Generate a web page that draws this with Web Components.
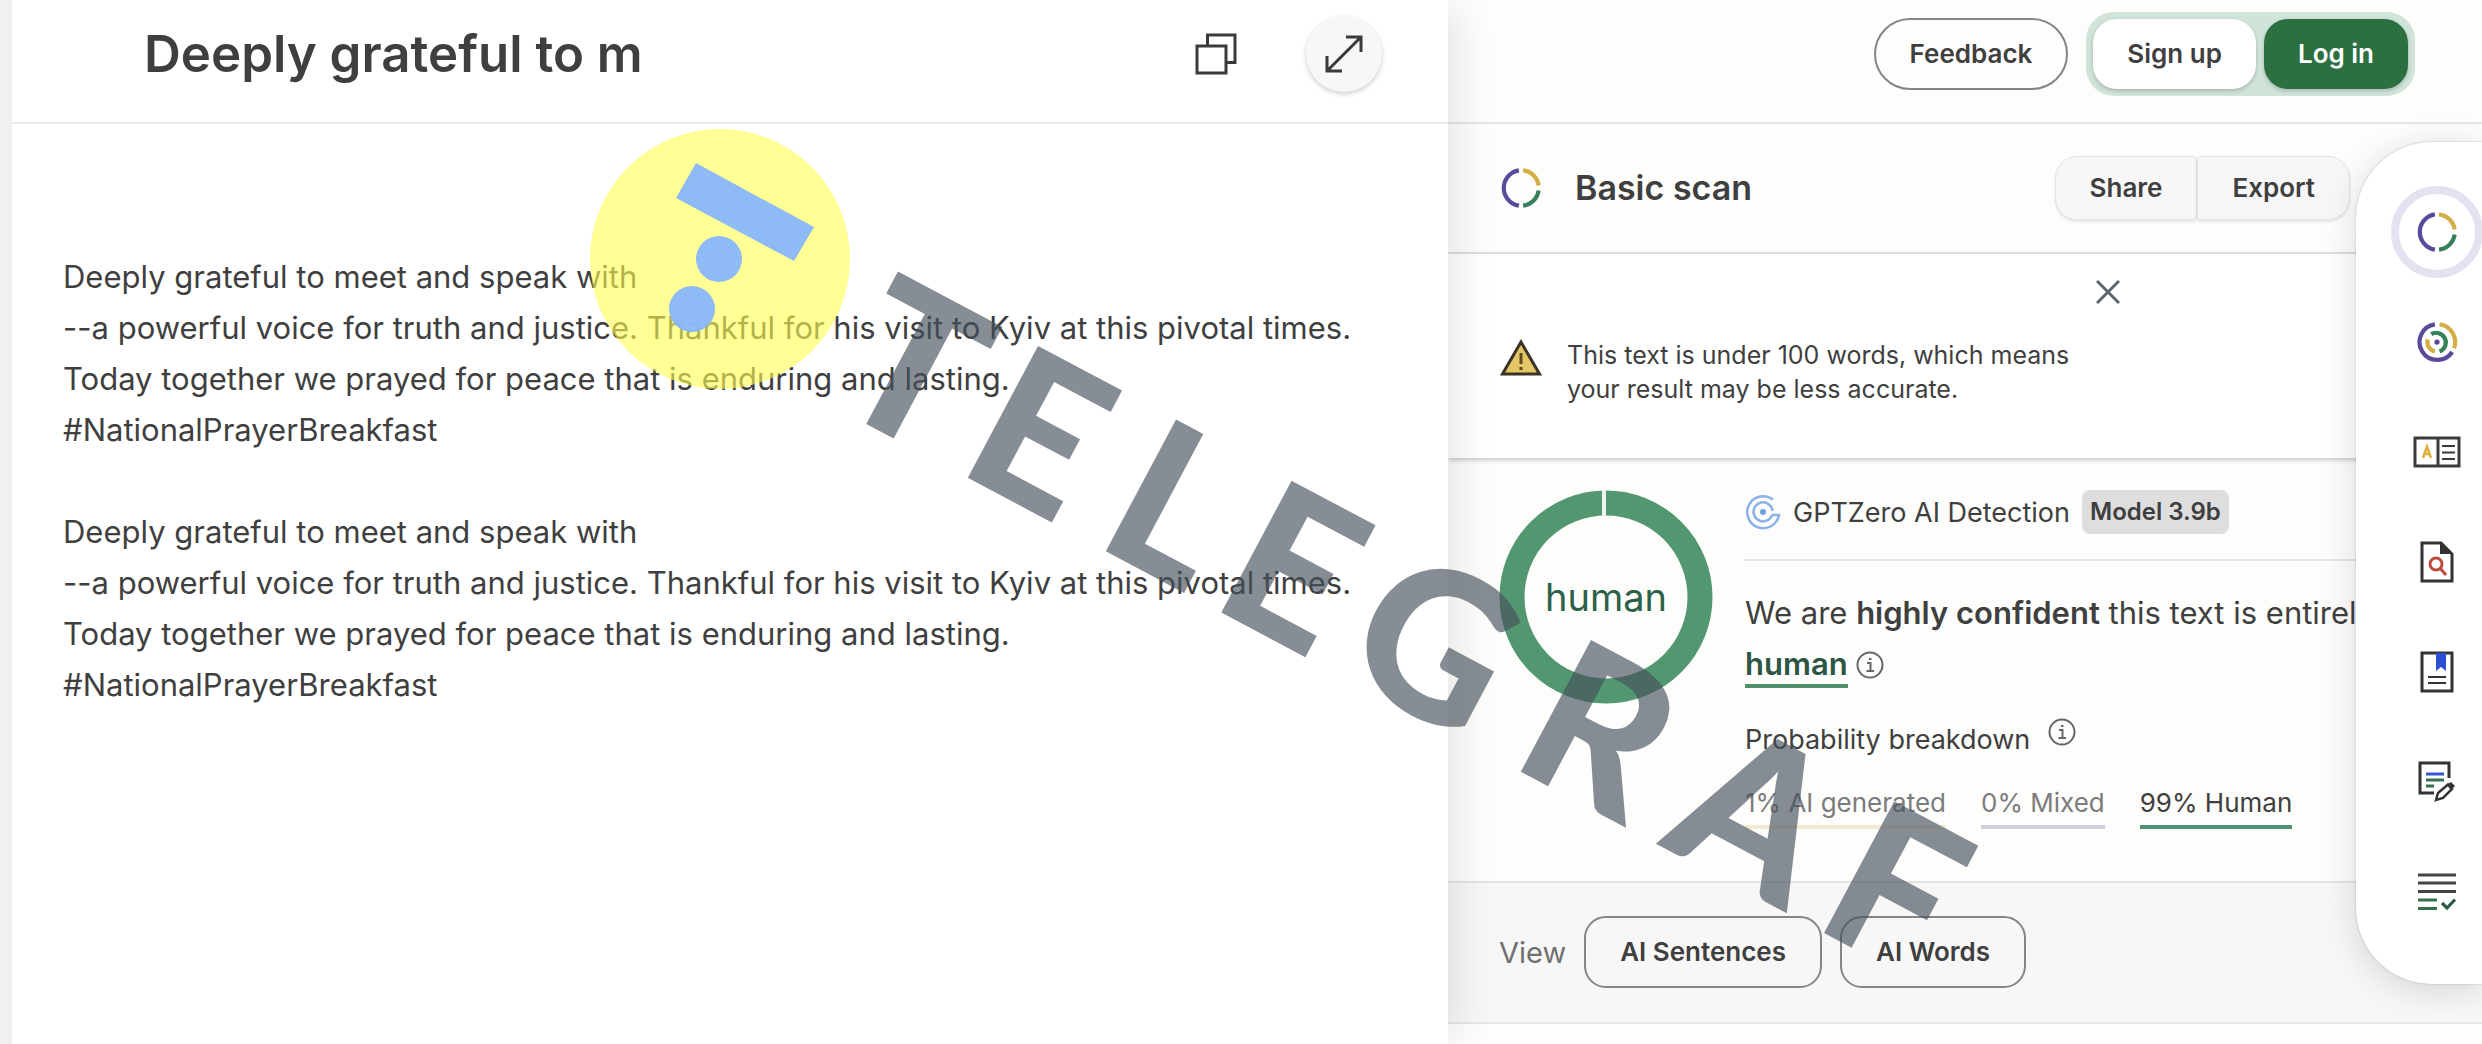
<!DOCTYPE html>
<html lang="en">
<head>
<meta charset="utf-8">
<title>Basic scan</title>
<style>
  html, body {
    height: 100%;
  }

  body {
    margin: 0;
    overflow: hidden;
    background: #f0f0f0;
    color: #3f3f3f;
    font-family: Inter, "Liberation Sans", sans-serif;
    font-size: 26px;
  }
</style>
</head>
<body>
<scan-page></scan-page>

<script>
const RING = `
  <path d="M18 3.2A17 17 0 0 0 18 36.8" stroke="#5b4a9c"/>
  <path d="M22 3.2A17 17 0 0 1 36.8 17.6" stroke="#d3ae45"/>
  <path d="M36.8 22.4A17 17 0 0 1 22 36.8" stroke="#35805a"/>`;

const ICONS = {
  ring: `<svg viewBox="0 0 40 40" width="42" height="42" fill="none" stroke-width="4">${RING}</svg>`,
  swirl: `<svg viewBox="0 0 40 40" width="42" height="42" fill="none" stroke-width="4">
      <path d="M18 3.2A17 17 0 1 0 34.5 29.5" stroke="#5b4a9c"/>
      <path d="M22.5 3.2A17 17 0 0 1 36.2 26" stroke="#d3ae45"/>
      <path d="M14.5 12.5A9.2 9.2 0 1 1 22.5 29" stroke="#35805a"/>
      <path d="M11.2 17.5A9.2 9.2 0 0 0 18 29" stroke="#d3ae45"/>
      <circle cx="20" cy="20" r="2.5" fill="#5b4a9c"/>
    </svg>`,
  reader: `<svg viewBox="0 0 48 32" width="48" height="32" fill="none" stroke="#3a3a3a" stroke-width="3">
      <path d="M2 2H46V30H2ZM25 2V30"/>
      <path d="M29 10H42M29 16.5H42M29 23H42" stroke-width="2"/>
      <path d="M10 22L14 10.5L18 22M11.5 18H16.5" stroke="#e0b23c" stroke-width="2.5"/>
    </svg>`,
  search: `<svg viewBox="0 0 34 42" width="34" height="42" fill="none" stroke="#333" stroke-width="3">
      <path d="M2 2H21L32 13V40H2Z"/>
      <path d="M20 2L32 13H20Z" fill="#333" stroke="none"/>
      <circle cx="16" cy="23" r="6" stroke="#c0483c"/>
      <path d="M20 27L26 34" stroke="#c0483c"/>
    </svg>`,
  bookmark: `<svg viewBox="0 0 34 42" width="34" height="42" fill="none" stroke="#333" stroke-width="3">
      <path d="M2 2H32V40H2Z"/>
      <path d="M16 2H26V20L21 16L16 20Z" fill="#2b50d6" stroke="none"/>
      <path d="M8 26H26M8 32H26" stroke-width="2"/>
    </svg>`,
  edit: `<svg viewBox="0 0 38 42" width="38" height="42" fill="none" stroke="#333" stroke-width="3">
      <path d="M31 17V2H2V32H16"/>
      <path d="M8 13H26" stroke="#3256cf"/>
      <path d="M8 19H26" stroke="#35704e"/>
      <path d="M8 25H16" stroke="#35704e"/>
      <path d="M18 39L20 32L30 23.5L34 28L25 37Z" stroke-width="2.5"/>
      <path d="M29 24L33 21L37 25L33 29Z" fill="#333" stroke="none"/>
    </svg>`,
  check: `<svg viewBox="0 0 38 38" width="38" height="38" fill="none" stroke="#444" stroke-width="3.2">
      <path d="M0 2H38M0 10H38M0 18.5H38"/>
      <path d="M0 27H19M0 35.5H19" stroke="#35704e"/>
      <path d="M24 30L29 35L37 26.5" stroke="#2d5c44"/>
    </svg>`,
  copy: `<svg viewBox="0 0 42 42" width="42" height="42" fill="none" stroke="#3a3a3a" stroke-width="3">
      <path d="M2 13H31V40H2Z"/>
      <path d="M12.5 13V2H40V29.5H31"/>
    </svg>`,
  expand: `<svg viewBox="0 0 40 40" width="40" height="40" fill="none" stroke="#3a3a3a" stroke-width="3">
      <path d="M3 37L37 3M22 3H37V18M3 22V37H18"/>
    </svg>`,
  close: `<svg viewBox="0 0 24 24" width="24" height="24" fill="none" stroke="#5c666e" stroke-width="3">
      <path d="M1 1L23 23M23 1L1 23"/>
    </svg>`,
  warning: `<svg viewBox="0 0 42 38" width="42" height="38">
      <path d="M21 4L39.5 36H2.5Z" fill="#e6c766" stroke="#3a3528" stroke-width="3"/>
      <path d="M21 15V26M21 29V32" stroke="#5a4a20" stroke-width="3"/>
    </svg>`,
  target: `<svg viewBox="0 0 36 36" width="36" height="36" fill="none" stroke="#8bb2e8" stroke-width="2.5">
      <path d="M28 5.5A16 16 0 1 0 34 21H27"/>
      <path d="M27 21A9.5 9.5 0 1 1 27.5 17"/>
      <circle cx="18" cy="18" r="3" fill="#6f9fe0" stroke="none"/>
    </svg>`,
  info: `<svg viewBox="0 0 28 28" width="28" height="28" fill="none" stroke="#666" stroke-width="2">
      <circle cx="14" cy="14" r="12.5"/>
      <path d="M11 12H14.5V20M10.5 20H18M13 8H15.5"/>
    </svg>`
};

class UiIcon extends HTMLElement {
  constructor() {
    super();
    this.attachShadow({ mode: "open" });
  }

  connectedCallback() {
    this.shadowRoot.innerHTML = `
      <style>
        :host { display: inline-flex; flex-shrink: 0; }
        svg { display: block; }
      </style>
      ${ICONS[this.getAttribute("name")]}
    `;
  }
}

class UiButton extends HTMLElement {
  constructor() {
    super();
    this.attachShadow({ mode: "open" });
  }

  connectedCallback() {
    this.shadowRoot.innerHTML = `
      <style>
        :host { display: inline-flex; }
        button {
          box-sizing: border-box;
          height: 72px;
          padding: 0 34px;
          border: 2px solid #858585;
          border-radius: 22px;
          background: transparent;
          color: inherit;
          font: 600 26px/32px Inter, "Liberation Sans", sans-serif;
          white-space: nowrap;
          cursor: pointer;
        }
        :host([kind="pill"]) button { border-radius: 36px; }
        :host([kind="light"]) button,
        :host([kind="solid"]) button {
          height: 70px;
          border: 0;
          border-radius: 24px;
          box-shadow: 0 2px 4px rgba(0, 0, 0, 0.2);
        }
        :host([kind="light"]) button { background: #fff; }
        :host([kind="solid"]) button { background: #2c7040; color: #fff; }
        :host([kind="start"]) button,
        :host([kind="end"]) button {
          height: 64px;
          border: 1px solid #e4e4e3;
          background: #f7f7f7;
          box-shadow: 0 2px 3px rgba(0, 0, 0, 0.1);
        }
        :host([kind="start"]) button { border-radius: 22px 4px 4px 22px; }
        :host([kind="end"]) button { border-radius: 4px 22px 22px 4px; }
      </style>
      <button type="button"><slot></slot></button>
    `;
  }
}

class DocPanel extends HTMLElement {
  constructor() {
    super();
    this.attachShadow({ mode: "open" });
  }

  connectedCallback() {
    this.shadowRoot.innerHTML = `
      <style>
        :host {
          display: flex;
          flex-direction: column;
          background: #fff;
          box-shadow: 20px 0 36px -8px rgba(0, 0, 0, 0.09);
        }
        header {
          display: flex;
          align-items: center;
          gap: 52px;
          padding: 12px 66px 26px 132px;
          border-bottom: 2px solid #ebebeb;
        }
        h1 {
          flex: 1;
          margin: 0;
          font-size: 51px;
          font-weight: 600;
          line-height: 84px;
        }
        button {
          display: flex;
          align-items: center;
          justify-content: center;
          width: 76px;
          height: 76px;
          margin: 0;
          padding: 0;
          border: 0;
          border-radius: 50%;
          background: none;
          cursor: pointer;
        }
        button.raised {
          background: #f7f7f7;
          box-shadow: 0 2px 5px rgba(0, 0, 0, 0.2);
        }
        .body {
          padding: 127px 51px;
          font-size: 31px;
          line-height: 51px;
        }
      </style>
      <header>
        <h1><slot name="title"></slot></h1>
        <button type="button" aria-label="Copy"><ui-icon name="copy"></ui-icon></button>
        <button type="button" class="raised" aria-label="Expand"><ui-icon name="expand"></ui-icon></button>
      </header>
      <div class="body"><slot></slot></div>
    `;
  }
}

class TopBar extends HTMLElement {
  constructor() {
    super();
    this.attachShadow({ mode: "open" });
  }

  connectedCallback() {
    this.shadowRoot.innerHTML = `
      <style>
        :host {
          display: flex;
          align-items: center;
          justify-content: flex-end;
          gap: 18px;
          padding: 12px 67px 26px;
          border-bottom: 2px solid #e6e6e4;
        }
        .group {
          display: flex;
          gap: 8px;
          padding: 7px;
          border-radius: 28px;
          background: #d0e4da;
        }
      </style>
      <ui-button kind="pill">Feedback</ui-button>
      <div class="group">
        <ui-button kind="light">Sign up</ui-button>
        <ui-button kind="solid">Log in</ui-button>
      </div>
    `;
  }
}

class ScanHeader extends HTMLElement {
  constructor() {
    super();
    this.attachShadow({ mode: "open" });
  }

  connectedCallback() {
    this.shadowRoot.innerHTML = `
      <style>
        :host {
          display: flex;
          align-items: center;
          gap: 33px;
          padding: 32px 132px 32px 52px;
          border-bottom: 2px solid #e3e3e2;
        }
        h2 {
          flex: 1;
          margin: 0;
          font-size: 34px;
          font-weight: 600;
          line-height: 48px;
        }
        .actions { display: flex; }
      </style>
      <ui-icon name="ring"></ui-icon>
      <h2><slot></slot></h2>
      <div class="actions">
        <ui-button kind="start">Share</ui-button>
        <ui-button kind="end">Export</ui-button>
      </div>
    `;
  }
}

class NoticeBar extends HTMLElement {
  constructor() {
    super();
    this.attachShadow({ mode: "open" });
  }

  connectedCallback() {
    this.shadowRoot.innerHTML = `
      <style>
        :host {
          display: block;
          position: relative;
          padding: 24px 52px 52px;
          background: #fff;
          box-shadow: 0 2px 5px rgba(0, 0, 0, 0.22);
        }
        .inner {
          display: flex;
          flex-direction: column;
          gap: 32px;
          max-width: 622px;
        }
        button {
          display: flex;
          align-self: flex-end;
          align-items: center;
          justify-content: center;
          width: 28px;
          height: 28px;
          padding: 0;
          border: 0;
          background: none;
          cursor: pointer;
        }
        .message {
          display: flex;
          gap: 25px;
        }
        p {
          max-width: 540px;
          margin: 0;
          font-size: 25px;
          line-height: 34px;
        }
      </style>
      <div class="inner">
        <button type="button" aria-label="Close"><ui-icon name="close"></ui-icon></button>
        <div class="message">
          <ui-icon name="warning"></ui-icon>
          <p><slot></slot></p>
        </div>
      </div>
    `;
  }
}

class ScoreRing extends HTMLElement {
  constructor() {
    super();
    this.attachShadow({ mode: "open" });
  }

  connectedCallback() {
    this.shadowRoot.innerHTML = `
      <style>
        :host {
          display: grid;
          place-items: center;
          width: 214px;
          height: 214px;
          color: #2c6049;
          font-size: 38px;
        }
        svg, span { grid-area: 1 / 1; }
      </style>
      <svg viewBox="0 0 214 214" width="214" height="214" fill="none">
        <circle cx="107" cy="107" r="94" stroke="#52976f" stroke-width="25"/>
        <path d="M105 0V27" stroke="#eef3ef" stroke-width="4"/>
      </svg>
      <span><slot></slot></span>
    `;
  }
}

class StatLabel extends HTMLElement {
  constructor() {
    super();
    this.attachShadow({ mode: "open" });
  }

  connectedCallback() {
    this.shadowRoot.innerHTML = `
      <style>
        :host {
          display: block;
          padding-bottom: 5px;
          border-bottom: 4px solid var(--line);
          color: #7c7c7c;
          font-size: 26px;
          line-height: 34px;
          white-space: nowrap;
        }
        :host([active]) { color: #3f3f3f; }
      </style>
      <slot></slot>
    `;
  }
}

class ScanResult extends HTMLElement {
  constructor() {
    super();
    this.attachShadow({ mode: "open" });
  }

  connectedCallback() {
    this.shadowRoot.innerHTML = `
      <style>
        :host {
          display: flex;
          align-items: flex-start;
          gap: 32px;
          padding: 32px 48px 52px 51px;
          border-bottom: 2px solid #e3e3e2;
        }
        score-ring { flex-shrink: 0; }
        .details { flex: 1; min-width: 0; }
        .model {
          display: flex;
          align-items: center;
          gap: 12px;
          padding-bottom: 25px;
          border-bottom: 2px solid #e4e4e3;
          font-size: 27px;
          white-space: nowrap;
        }
        .badge {
          padding: 0 8px;
          border-radius: 8px;
          background: #dedede;
          font-size: 24px;
          font-weight: 600;
          line-height: 44px;
        }
        .verdict {
          margin: 26px 0 34px;
          font-size: 31px;
          line-height: 51px;
        }
        .verdict a {
          padding-bottom: 2px;
          border-bottom: 4px solid #4f8f6c;
          color: #2c5544;
          font-weight: 600;
          text-decoration: none;
        }
        .verdict b { font-weight: 600; }
        .verdict ui-icon { vertical-align: -4px; }
        h3 {
          display: flex;
          gap: 18px;
          margin: 0 0 29px;
          font-size: 27px;
          font-weight: 400;
          line-height: 34px;
        }
        h3 ui-icon { height: 18px; align-items: center; }
        .stats { display: flex; gap: 35px; }
      </style>
      <score-ring>human</score-ring>
      <div class="details">
        <div class="model">
          <ui-icon name="target"></ui-icon>
          <span>GPTZero AI Detection</span>
          <span class="badge">Model 3.9b</span>
        </div>
        <p class="verdict">We are <b>highly confident</b> this text is entirely <a href="#human">human</a> <ui-icon name="info"></ui-icon></p>
        <h3>Probability breakdown <ui-icon name="info"></ui-icon></h3>
        <div class="stats">
          <stat-label style="--line: #f3ebd0">1% AI generated</stat-label>
          <stat-label style="--line: #d0cfe0">0% Mixed</stat-label>
          <stat-label active style="--line: #4f9470">99% Human</stat-label>
        </div>
      </div>
    `;
  }
}

class ViewBar extends HTMLElement {
  constructor() {
    super();
    this.attachShadow({ mode: "open" });
  }

  connectedCallback() {
    this.shadowRoot.innerHTML = `
      <style>
        :host {
          display: flex;
          align-items: center;
          gap: 18px;
          padding: 33px 51px 34px;
          border-bottom: 2px solid #e6e6e4;
          background: #f7f7f7;
        }
        span { color: #707070; font-size: 29px; }
      </style>
      <span>View</span>
      <ui-button>AI Sentences</ui-button>
      <ui-button>AI Words</ui-button>
    `;
  }
}

class ToolRail extends HTMLElement {
  constructor() {
    super();
    this.attachShadow({ mode: "open" });
  }

  connectedCallback() {
    const tools = [
      ["ring", "Basic scan"],
      ["swirl", "Advanced scan"],
      ["reader", "Vocabulary"],
      ["search", "Plagiarism"],
      ["bookmark", "Sources"],
      ["edit", "Writing feedback"],
      ["check", "Grammar"]
    ];
    this.shadowRoot.innerHTML = `
      <style>
        :host {
          display: block;
          border-radius: 76px 0 0 76px;
          background: #fff;
          box-shadow: 0 6px 36px rgba(0, 0, 0, 0.14), 0 0 2px rgba(0, 0, 0, 0.25);
        }
        nav {
          display: flex;
          flex-direction: column;
          align-items: center;
          gap: 18px;
          padding: 44px 0 46px 36px;
        }
        button {
          box-sizing: border-box;
          display: flex;
          align-items: center;
          justify-content: center;
          width: 92px;
          height: 92px;
          padding: 0;
          border: 0;
          border-radius: 50%;
          background: none;
          cursor: pointer;
        }
        button:first-child { border: 8px solid #e4e2f0; }
      </style>
      <nav>
        ${tools.map(([icon, label]) => `<button type="button" aria-label="${label}"><ui-icon name="${icon}"></ui-icon></button>`).join("")}
      </nav>
    `;
  }
}

// Stamp that lies diagonally over both panels
class PageStamp extends HTMLElement {
  constructor() {
    super();
    this.attachShadow({ mode: "open" });
  }

  connectedCallback() {
    this.shadowRoot.innerHTML = `
      <style>
        :host { display: block; pointer-events: none; }
        svg { display: block; overflow: visible; }
        text {
          font-family: Lato, "Open Sans", sans-serif;
          font-size: 206px;
          font-weight: 900;
        }
      </style>
      <svg viewBox="0 0 1420 850" width="1420" height="850">
        <circle cx="130" cy="139" r="130" fill="rgba(255, 255, 80, 0.6)"/>
        <g fill="#88b6fb" fill-opacity="0.95">
          <path d="M106 43L86 78L204 141L224 107Z"/>
          <circle cx="129" cy="139" r="23"/>
          <circle cx="102" cy="189" r="23"/>
        </g>
        <text transform="translate(380 359) rotate(28)" text-anchor="middle" x="-102 41 192 328 488 675 851 1010" y="0" fill="rgba(69, 80, 91, 0.65)">TELEGRAF</text>
      </svg>
    `;
  }
}

class ScanPage extends HTMLElement {
  constructor() {
    super();
    this.attachShadow({ mode: "open" });
  }

  connectedCallback() {
    this.shadowRoot.innerHTML = `
      <style>
        :host {
          display: flex;
          position: relative;
          box-sizing: border-box;
          min-height: 100%;
          padding-left: 12px;
          overflow: hidden;
        }
        doc-panel { position: relative; z-index: 1; flex: 1436 1 0; min-width: 0; }
        main { flex: 1034 1 0; min-width: 0; background: #fdfdfb; }
        p { margin: 0 0 51px; }
        tool-rail { position: absolute; z-index: 2; top: 142px; right: 0; width: 126px; }
        page-stamp { position: absolute; z-index: 3; top: 120px; left: 590px; }
      </style>
      <doc-panel>
        <span slot="title">Deeply grateful to m</span>
        <p>Deeply grateful to meet and speak with<br>
        --a powerful voice for truth and justice. Thankful for his visit to Kyiv at this pivotal times.<br>
        Today together we prayed for peace that is enduring and lasting.<br>
        #NationalPrayerBreakfast</p>
        <p>Deeply grateful to meet and speak with<br>
        --a powerful voice for truth and justice. Thankful for his visit to Kyiv at this pivotal times.<br>
        Today together we prayed for peace that is enduring and lasting.<br>
        #NationalPrayerBreakfast</p>
      </doc-panel>
      <main>
        <top-bar></top-bar>
        <scan-header>Basic scan</scan-header>
        <notice-bar>This text is under 100 words, which means your result may be less accurate.</notice-bar>
        <scan-result></scan-result>
        <view-bar></view-bar>
      </main>
      <tool-rail></tool-rail>
      <page-stamp></page-stamp>
    `;
  }
}

customElements.define("ui-icon", UiIcon);
customElements.define("ui-button", UiButton);
customElements.define("doc-panel", DocPanel);
customElements.define("top-bar", TopBar);
customElements.define("scan-header", ScanHeader);
customElements.define("notice-bar", NoticeBar);
customElements.define("score-ring", ScoreRing);
customElements.define("stat-label", StatLabel);
customElements.define("scan-result", ScanResult);
customElements.define("view-bar", ViewBar);
customElements.define("tool-rail", ToolRail);
customElements.define("page-stamp", PageStamp);
customElements.define("scan-page", ScanPage);
</script>
</body>
</html>
